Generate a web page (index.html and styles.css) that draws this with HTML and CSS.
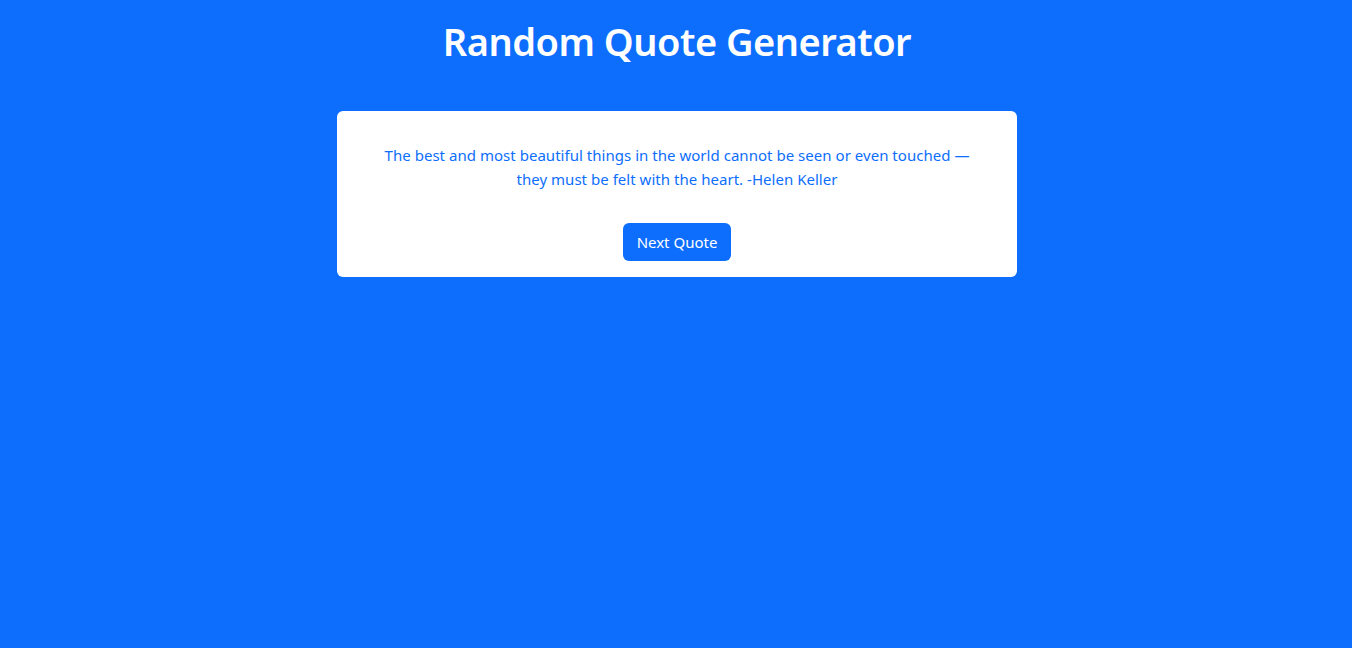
FILE: index.html
```html
<!DOCTYPE html>
<html lang="en">
<head>
<meta charset="utf-8">
<title>Random Quote Generator</title>
<link rel="stylesheet" href="styles.css">
</head>
<body>
<main class="page">
  <h1 class="title">Random Quote Generator</h1>
  <section class="card">
    <p class="quote">The best and most beautiful things in the world cannot be seen or even touched — they must be felt with the heart. -Helen Keller</p>
    <button class="btn" type="button">Next Quote</button>
  </section>
</main>
</body>
</html>
```

FILE: styles.css
```css
* { box-sizing: border-box; }
html, body { margin: 0; height: 100%; }
body {
  background: #0d6efd;
  font-family: "Noto Sans", "Open Sans", sans-serif;
}
.page {
  display: flex;
  flex-direction: column;
  align-items: center;
  padding-top: 17px;
  padding-left: 2px;
}
.title {
  margin: 0 0 46px;
  color: #fff;
  font-size: 38px;
  letter-spacing: -0.5px;
  line-height: 48px;
  font-weight: 600;
}
.card {
  width: 680px;
  background: #fff;
  border-radius: 6px;
  padding: 32px 40px 16px;
  display: flex;
  flex-direction: column;
  align-items: center;
}
.quote {
  margin: 0 0 32px;
  color: #0d6efd;
  font-size: 15px;
  letter-spacing: 0.03px;
  line-height: 24px;
  text-align: center;
}
.btn {
  background: #0d6efd;
  color: #fff;
  border: none;
  border-radius: 6px;
  height: 38px;
  padding: 0 14px;
  font-family: inherit;
  font-size: 15px;
}
```
